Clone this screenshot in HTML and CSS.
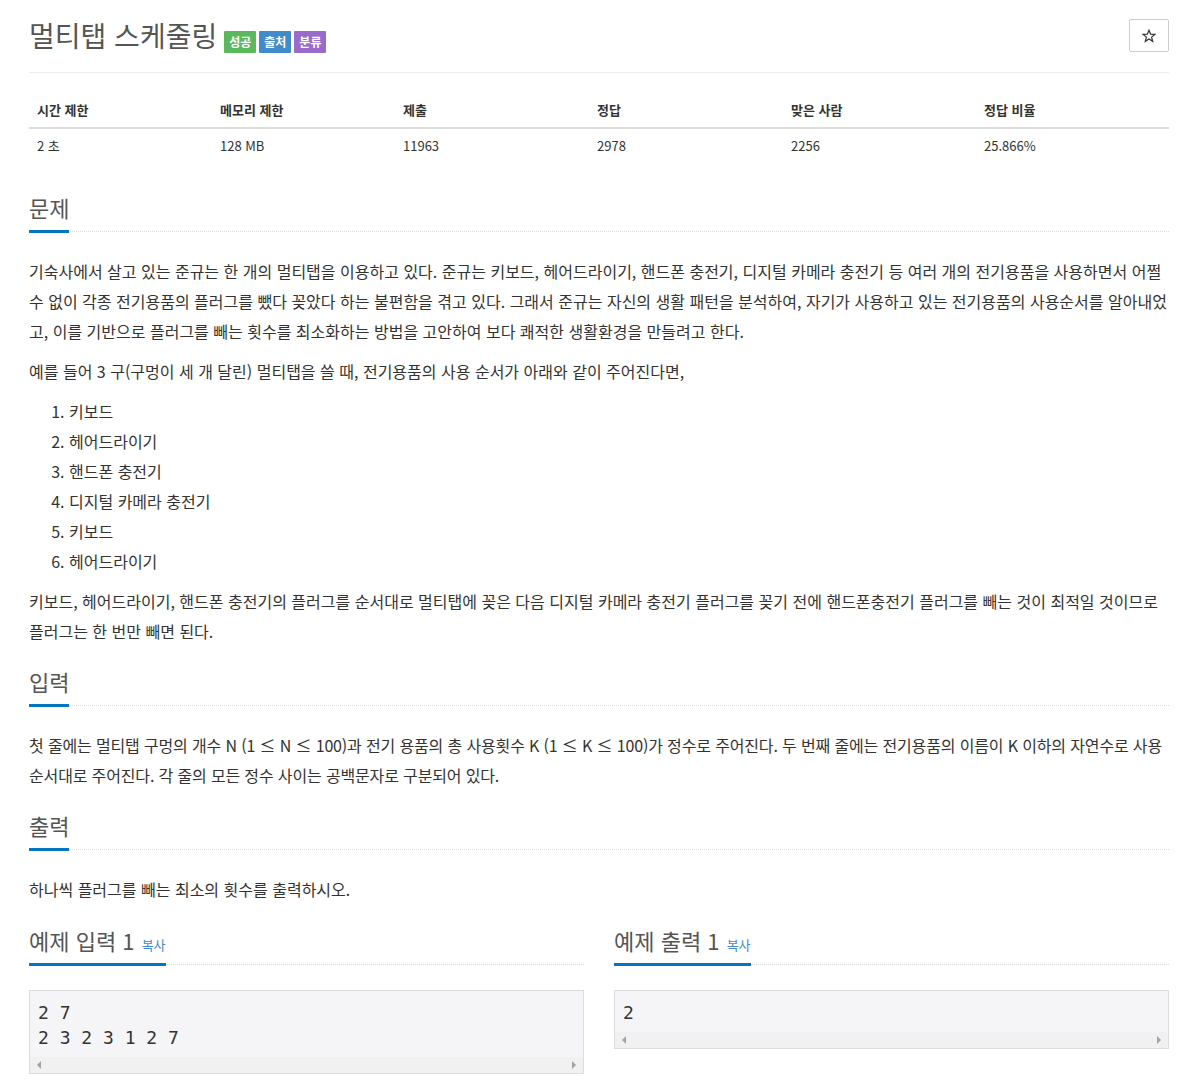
FILE: index.html
```html
<!DOCTYPE html>
<html lang="ko">
<head>
<meta charset="utf-8">
<title>멀티탭 스케줄링</title>
<link rel="stylesheet" href="styles.css">
</head>
<body>
<div class="container">
  <div class="page-header">
    <h1 class="title">
      <span class="title-text">멀티탭 스케줄링</span>
      <span class="labels">
        <span class="label label-green">성공</span>
        <span class="label label-blue">출처</span>
        <span class="label label-purple">분류</span>
      </span>
    </h1>
    <button class="star-btn" type="button" aria-label="즐겨찾기">
      <svg width="14" height="14" viewBox="0 0 14 14"><polygon points="7,1.2 8.6,5.2 12.9,5.4 9.6,8.1 10.7,12.3 7,9.9 3.3,12.3 4.4,8.1 1.1,5.4 5.4,5.2" fill="none" stroke="#333" stroke-width="1.2" stroke-linejoin="miter"/></svg>
    </button>
  </div>

  <table class="info-table">
    <thead>
      <tr>
        <th class="c1">시간 제한</th>
        <th class="c2">메모리 제한</th>
        <th class="c3">제출</th>
        <th class="c4">정답</th>
        <th class="c5">맞은 사람</th>
        <th class="c6">정답 비율</th>
      </tr>
    </thead>
    <tbody>
      <tr>
        <td>2 초</td>
        <td>128 MB</td>
        <td>11963</td>
        <td>2978</td>
        <td>2256</td>
        <td>25.866%</td>
      </tr>
    </tbody>
  </table>

  <section class="section">
    <div class="headline"><h2>문제</h2></div>
    <div class="content">
      <p>기숙사에서 살고 있는 준규는 한 개의 멀티탭을 이용하고 있다. 준규는 키보드, 헤어드라이기, 핸드폰 충전기, 디지털 카메라 충전기 등 여러 개의 전기용품을 사용하면서 어쩔 수 없이 각종 전기용품의 플러그를 뺐다 꽂았다 하는 불편함을 겪고 있다. 그래서 준규는 자신의 생활 패턴을 분석하여, 자기가 사용하고 있는 전기용품의 사용순서를 알아내었고, 이를 기반으로 플러그를 빼는 횟수를 최소화하는 방법을 고안하여 보다 쾌적한 생활환경을 만들려고 한다.</p>
      <p>예를 들어 3 구(구멍이 세 개 달린) 멀티탭을 쓸 때, 전기용품의 사용 순서가 아래와 같이 주어진다면,</p>
      <ol>
        <li>키보드</li>
        <li>헤어드라이기</li>
        <li>핸드폰 충전기</li>
        <li>디지털 카메라 충전기</li>
        <li>키보드</li>
        <li>헤어드라이기</li>
      </ol>
      <p>키보드, 헤어드라이기, 핸드폰 충전기의 플러그를 순서대로 멀티탭에 꽂은 다음 디지털 카메라 충전기 플러그를 꽂기 전에 핸드폰충전기 플러그를 빼는 것이 최적일 것이므로 플러그는 한 번만 빼면 된다.</p>
    </div>
  </section>

  <section class="section">
    <div class="headline"><h2>입력</h2></div>
    <div class="content">
      <p class="tight">첫 줄에는 멀티탭 구멍의 개수 N (1 ≤ N ≤ 100)과 전기 용품의 총 사용횟수 K (1 ≤ K ≤ 100)가 정수로 주어진다. 두 번째 줄에는 전기용품의 이름이 K 이하의 자연수로 사용순서대로 주어진다. 각 줄의 모든 정수 사이는 공백문자로 구분되어 있다.</p>
    </div>
  </section>

  <section class="section">
    <div class="headline"><h2>출력</h2></div>
    <div class="content">
      <p>하나씩 플러그를 빼는 최소의 횟수를 출력하시오.</p>
    </div>
  </section>

  <div class="samples">
    <section class="sample">
      <div class="headline"><h2>예제 입력 1 <a class="copy" href="#">복사</a></h2></div>
      <div class="sample-box">
        <pre class="sample-data">2 7
2 3 2 3 1 2 7</pre>
        <div class="hscroll"><span class="arrow-left"></span><span class="arrow-right"></span></div>
      </div>
    </section>
    <section class="sample">
      <div class="headline"><h2>예제 출력 1 <a class="copy" href="#">복사</a></h2></div>
      <div class="sample-box">
        <pre class="sample-data">2</pre>
        <div class="hscroll"><span class="arrow-left"></span><span class="arrow-right"></span></div>
      </div>
    </section>
  </div>
</div>
</body>
</html>
```
FILE: styles.css
```css
html, body {
  margin: 0;
  padding: 0;
  background: #fff;
}
body {
  font-family: "Noto Sans CJK KR", "Noto Sans", sans-serif;
  color: #333;
  font-size: 16px;
}
.container {
  width: 1140px;
  margin: 0 auto;
  padding-top: 19px;
}
.page-header {
  display: flex;
  justify-content: space-between;
  align-items: flex-start;
  padding-bottom: 20px;
  border-bottom: 1px solid #eee;
}
.title {
  display: flex;
  align-items: center;
  height: 33px;
  margin: 0;
  font-size: 28px;
  line-height: 33px;
  font-weight: 400;
  color: #555;
}
.labels {
  display: flex;
  gap: 3px;
  margin-left: 7px;
  margin-top: 13px;
}
.label {
  display: inline-block;
  height: 22px;
  line-height: 22px;
  padding: 0 5px;
  font-size: 12px;
  font-weight: 700;
  color: #fff;
  border-radius: 1px;
}
.label-green { background: #5cb85c; }
.label-blue { background: #428bca; }
.label-purple { background: #9b6bcc; }
.star-btn {
  width: 40px;
  height: 33px;
  padding: 0;
  margin: 0;
  border: 1px solid #ccc;
  border-radius: 2px;
  background: #fff;
  display: flex;
  align-items: center;
  justify-content: center;
}
.star-btn svg { display: block; }

.info-table {
  width: 1140px;
  border-collapse: collapse;
  margin-top: 20px;
  margin-bottom: 33px;
  font-size: 13px;
  table-layout: fixed;
}
.info-table th, .info-table td {
  box-sizing: border-box;
  text-align: left;
  padding: 8px;
  line-height: 18px;
}
.info-table th {
  font-weight: 700;
  border-bottom: 2px solid #ddd;
}
.c1, .c2 { width: 183px; }
.c3, .c4 { width: 194px; }
.c5, .c6 { width: 193px; }

.section + .section { margin-top: 24px; }
.headline {
  border-bottom: 1px dotted #ddd;
}
.headline h2 {
  display: inline-block;
  margin: 0 0 -2px 0;
  padding-bottom: 12px;
  font-size: 22px;
  line-height: 22px;
  font-weight: 400;
  color: #555;
  border-bottom: 3px solid #0076c0;
}
.content {
  margin-top: 24px;
}
.content p {
  margin: 0 0 10px;
  line-height: 30px;
}
.content p.tight {
  letter-spacing: -0.15px;
}
.content ol {
  margin: 0 0 10px;
  padding-left: 40px;
  line-height: 30px;
}

.samples {
  display: flex;
  gap: 30px;
  margin-top: 25px;
}
.sample {
  flex: 1 1 0;
  min-width: 0;
}
.copy {
  font-size: 13px;
  line-height: 1;
  color: #428bca;
  text-decoration: none;
  margin-left: 1px;
}
.sample-box {
  margin-top: 25px;
  border: 1px solid #ddd;
  background: #f5f5f7;
}
.sample-data {
  margin: 0;
  padding: 8.5px 8px 7.5px;
  font-family: "DejaVu Sans Mono", monospace;
  font-size: 18px;
  line-height: 25px;
  color: #333;
}
.hscroll {
  height: 16px;
  background: #f1f1f1;
  display: flex;
  justify-content: space-between;
  align-items: center;
  padding: 0 7px;
}
.arrow-left, .arrow-right {
  width: 0;
  height: 0;
  border-top: 4px solid transparent;
  border-bottom: 4px solid transparent;
}
.arrow-left { border-right: 4px solid #a3a3a3; }
.arrow-right { border-left: 4px solid #a3a3a3; }
```
